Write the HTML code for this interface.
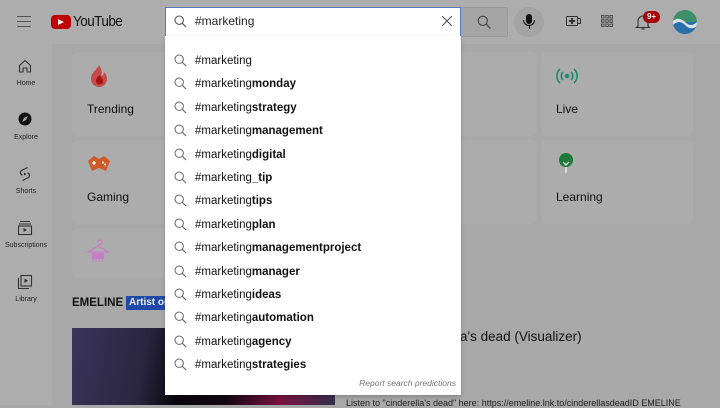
<!DOCTYPE html>
<html><head><meta charset="utf-8"><style>
*{margin:0;padding:0;box-sizing:border-box}
body{width:720px;height:405px;overflow:hidden;background:#a8a8a8;font-family:"Liberation Sans",Arial,sans-serif;position:relative;color:#0f0f0f}
.hdr{position:absolute;left:0;top:0;width:720px;height:44px;background:#adadad}
.side{position:absolute;left:0;top:44px;width:52px;height:361px;background:#adadad}
.si{position:absolute;left:0;width:52px;text-align:center;font-size:7px;color:#222}
.card{position:absolute;width:152px;height:84px;background:#acacac;border-radius:6px}
.card span{position:absolute;left:15px;top:50px;font-size:12px}
.dd{position:absolute;left:165px;top:36px;width:296px;height:359px;background:#fff;box-shadow:0 2px 4px rgba(0,0,0,.2)}
.row{position:absolute;left:0;height:23px;width:296px;font-size:11.5px;color:#111}
.row svg{position:absolute;left:9px;top:2px}
.row b{font-weight:bold}
.row .t{position:absolute;left:30px;top:3px}
</style></head><body>
<div class="hdr"></div>
<div class="side"></div>
<div style="position:absolute;left:17px;top:16px;width:14px;height:1.3px;background:#555;box-shadow:0 5px 0 #555,0 10px 0 #555"></div>
<div style="position:absolute;left:51px;top:15px;width:20px;height:14px;background:#c00000;border-radius:4px"></div>
<div style="position:absolute;left:58px;top:18.5px;width:0;height:0;border-left:6px solid #eee;border-top:3.5px solid transparent;border-bottom:3.5px solid transparent"></div>
<div style="position:absolute;left:73px;top:13px;font-size:15px;letter-spacing:-0.6px;color:#111;transform:scaleX(.9);transform-origin:left">YouTube</div>
<div style="position:absolute;left:165px;top:7px;width:296px;height:30px;background:#fff;border:1px solid #5c7bbf;border-bottom-color:#b8c4e0"></div>
<svg style="position:absolute;left:174px;top:15px" width="13" height="13" viewBox="0 0 13 13"><circle cx="5.2" cy="5.2" r="4.2" fill="none" stroke="#555" stroke-width="1.1"/><path d="M8.3 8.3L12 12" stroke="#555" stroke-width="1.2"/></svg>
<div style="position:absolute;left:195px;top:14px;font-size:12px;color:#222">#marketing</div>
<svg style="position:absolute;left:442px;top:16px" width="10" height="10"><path d="M0 0L10 10M10 0L0 10" stroke="#555" stroke-width="1.1"/></svg>
<div style="position:absolute;left:461px;top:7px;width:47px;height:30px;background:#a5a5a5;border:1px solid #999;border-left:none;border-radius:0 2px 2px 0"></div>
<svg style="position:absolute;left:477px;top:15px" width="14" height="14"><circle cx="5.8" cy="5.8" r="4.6" fill="none" stroke="#444" stroke-width="1.1"/><path d="M9.2 9.2L13.5 13.5" stroke="#444" stroke-width="1.2"/></svg>
<div style="position:absolute;left:514px;top:7px;width:30px;height:30px;border-radius:50%;background:#a3a3a3"></div>
<div style="position:absolute;left:526px;top:14px;width:6px;height:10px;border-radius:3px;background:#111"></div>
<div style="position:absolute;left:523px;top:20px;width:12px;height:6px;border:1.2px solid #111;border-top:none;border-radius:0 0 6px 6px"></div>
<div style="position:absolute;left:528.5px;top:26px;width:1.2px;height:3px;background:#111"></div>
<div style="position:absolute;left:566px;top:16px;width:12px;height:10px;border:1.2px solid #333;border-radius:1px"></div>
<div style="position:absolute;left:569px;top:20.4px;width:6px;height:1.2px;background:#333"></div><div style="position:absolute;left:571.4px;top:18px;width:1.2px;height:6px;background:#333"></div>
<div style="position:absolute;left:578px;top:18px;width:3px;height:6px;border:1.2px solid #333;border-left:none"></div>
<svg style="position:absolute;left:601px;top:15px" width="12" height="12"><g fill="none" stroke="#444" stroke-width=".9"><rect x=".5" y=".5" width="2.5" height="2.5"/><rect x="4.8" y=".5" width="2.5" height="2.5"/><rect x="9" y=".5" width="2.5" height="2.5"/><rect x=".5" y="4.8" width="2.5" height="2.5"/><rect x="4.8" y="4.8" width="2.5" height="2.5"/><rect x="9" y="4.8" width="2.5" height="2.5"/><rect x=".5" y="9" width="2.5" height="2.5"/><rect x="4.8" y="9" width="2.5" height="2.5"/><rect x="9" y="9" width="2.5" height="2.5"/></g></svg>
<svg style="position:absolute;left:635px;top:13px" width="16" height="18"><path d="M3 13V8a5 5 0 0 1 10 0v5l1.5 1.5h-13z" fill="none" stroke="#333" stroke-width="1.1"/><path d="M6.5 16h3" stroke="#333" stroke-width="1.2"/></svg>
<div style="position:absolute;left:643px;top:11px;width:17px;height:12px;border-radius:6px;background:#a80000;color:#fff;font-size:8px;font-weight:bold;text-align:center;line-height:12px">9+</div>
<svg style="position:absolute;left:673px;top:10px" width="24" height="24"><defs><clipPath id="c"><circle cx="12" cy="12" r="12"/></clipPath></defs><g clip-path="url(#c)"><rect width="24" height="24" fill="#3d8f6a"/><rect y="12" width="24" height="12" fill="#2a6fa8"/><path d="M0 11q6-5 12 1t12 0v4q-6 5-12-1t-12 0z" fill="#d8e4ea"/></g></svg>
<svg style="position:absolute;left:18px;top:59px" width="14" height="14"><path d="M1.5 6.5L7 1.5l5.5 5V13h-3.5V9h-4v4H1.5z" fill="none" stroke="#333" stroke-width="1.1"/></svg>
<div class="si" style="top:80px">Home</div>
<svg style="position:absolute;left:18px;top:112px" width="14" height="14"><circle cx="7" cy="7" r="6.5" fill="#111"/><path d="M4 10l2-4 4-2-2 4z" fill="#aaa"/></svg>
<div class="si" style="top:134px">Explore</div>
<svg style="position:absolute;left:18px;top:166px" width="14" height="16"><path d="M9.5 1.5L3.5 4.5a2.5 2.5 0 0 0 1 4.5M4.5 14.5l6-3a2.5 2.5 0 0 0-1-4.5" fill="none" stroke="#333" stroke-width="1.2"/><path d="M6 6.5v3l2.5-1.5z" fill="#333"/></svg>
<div class="si" style="top:188px">Shorts</div>
<svg style="position:absolute;left:17px;top:220px" width="16" height="16"><path d="M3 1.5h10M2 4h12" stroke="#333" stroke-width="1"/><rect x="1.5" y="6" width="13" height="8.5" fill="none" stroke="#333" stroke-width="1.1"/><path d="M6.5 8v4l3.5-2z" fill="#333"/></svg>
<div class="si" style="top:242px">Subscriptions</div>
<svg style="position:absolute;left:17px;top:274px" width="16" height="16"><path d="M1.5 4v10.5H12" fill="none" stroke="#333" stroke-width="1.1"/><rect x="4" y="1.5" width="10.5" height="10.5" fill="none" stroke="#333" stroke-width="1.1"/><path d="M7.5 4.5v4.5l3.5-2.2z" fill="#333"/></svg>
<div class="si" style="top:296px">Library</div>
<div class="card" style="left:72px;top:52px"><span>Trending</span></div>
<svg style="position:absolute;left:89px;top:64px" width="20" height="24"><path d="M10 1c-1 4-8 7-8 14a8 8 0 0 0 16 0c0-4-2-6-3-7 0 3-2 4-3 4 2-3 0-8-2-11z" fill="#c24b4b"/><path d="M7 17a3.5 3.5 0 0 0 7 0c0-3-3-4-3-6-2 1-4 3-4 6z" fill="#aa1111"/></svg>
<div class="card" style="left:72px;top:140px"><span>Gaming</span></div>
<svg style="position:absolute;left:86px;top:155px" width="26" height="18"><path d="M2 6l6-5 5 3 5-3 6 5-4 10-7-3-7 3z" fill="#cf5a2a"/><path d="M6 8h4M8 6v4" stroke="#fff" stroke-width="1.3"/><circle cx="17" cy="7.5" r="1" fill="#fff"/><circle cx="19" cy="9.5" r="1" fill="#fff"/></svg>
<div class="card" style="left:72px;top:228px;height:50px"></div>
<svg style="position:absolute;left:86px;top:238px" width="24" height="26"><path d="M12 4a2 2 0 1 1 2 2l-2 2L2 14h20L12 8" fill="none" stroke="#c97cc6" stroke-width="1.3"/><rect x="6" y="15" width="12" height="6" fill="#c97cc6"/><path d="M7 21v3M10 21v3M13 21v3M16 21v3" stroke="#c97cc6"/></svg>
<div class="card" style="left:385px;top:52px"><span style="left:0">hows</span></div>
<div class="card" style="left:385px;top:140px"></div>
<div class="card" style="left:541px;top:52px"><span>Live</span></div>
<svg style="position:absolute;left:555px;top:66px" width="24" height="20"><circle cx="12" cy="10" r="2.3" fill="#1f8a6e"/><path d="M8 6a5.5 5.5 0 0 0 0 8M16 6a5.5 5.5 0 0 1 0 8M5 3a9.5 9.5 0 0 0 0 14M19 3a9.5 9.5 0 0 1 0 14" fill="none" stroke="#1f8a6e" stroke-width="1.6"/></svg>
<div class="card" style="left:541px;top:140px"><span>Learning</span></div>
<svg style="position:absolute;left:557px;top:152px" width="18" height="22"><circle cx="9" cy="8" r="7" fill="#1d7a3a"/><path d="M9 15v6M6 10l3 3 3-3" stroke="#eee" stroke-width="1.3" fill="none"/></svg>
<div style="position:absolute;left:72px;top:297px;font-size:11.5px;font-weight:bold;color:#111">EMELINE</div>
<div style="position:absolute;left:126px;top:296px;width:40px;height:14px;background:#1f49a6;color:#eee;font-size:10px;font-weight:bold;padding-left:3px;line-height:14px;white-space:nowrap;overflow:hidden">Artist on</div>
<div style="position:absolute;left:72px;top:328px;width:263px;height:77px;background:linear-gradient(100deg,#3a3558 0%,#2a2540 28%,#08070c 42%,#140810 60%,#7a1240 80%,#34304e 100%)"></div>
<div style="position:absolute;left:460px;top:329px;font-size:13.5px;color:#111">a's dead (Visualizer)</div>
<div style="position:absolute;left:346px;top:398px;font-size:9px;color:#222;white-space:nowrap">Listen to "cinderella's dead" here: https://emeline.lnk.to/cinderellasdeadID EMELINE</div>
<div class="dd">
<div class="row" style="top:16px"><svg width="13" height="13"><circle cx="5.2" cy="5.2" r="4.2" fill="none" stroke="#666" stroke-width="1"/><path d="M8.3 8.3L12 12" stroke="#666" stroke-width="1.1"/></svg><span class="t">#marketing</span></div>
<div class="row" style="top:39.4px"><svg width="13" height="13"><circle cx="5.2" cy="5.2" r="4.2" fill="none" stroke="#666" stroke-width="1"/><path d="M8.3 8.3L12 12" stroke="#666" stroke-width="1.1"/></svg><span class="t">#marketing<b>monday</b></span></div>
<div class="row" style="top:62.8px"><svg width="13" height="13"><circle cx="5.2" cy="5.2" r="4.2" fill="none" stroke="#666" stroke-width="1"/><path d="M8.3 8.3L12 12" stroke="#666" stroke-width="1.1"/></svg><span class="t">#marketing<b>strategy</b></span></div>
<div class="row" style="top:86.2px"><svg width="13" height="13"><circle cx="5.2" cy="5.2" r="4.2" fill="none" stroke="#666" stroke-width="1"/><path d="M8.3 8.3L12 12" stroke="#666" stroke-width="1.1"/></svg><span class="t">#marketing<b>management</b></span></div>
<div class="row" style="top:109.6px"><svg width="13" height="13"><circle cx="5.2" cy="5.2" r="4.2" fill="none" stroke="#666" stroke-width="1"/><path d="M8.3 8.3L12 12" stroke="#666" stroke-width="1.1"/></svg><span class="t">#marketing<b>digital</b></span></div>
<div class="row" style="top:133px"><svg width="13" height="13"><circle cx="5.2" cy="5.2" r="4.2" fill="none" stroke="#666" stroke-width="1"/><path d="M8.3 8.3L12 12" stroke="#666" stroke-width="1.1"/></svg><span class="t">#marketing<b>_tip</b></span></div>
<div class="row" style="top:156.4px"><svg width="13" height="13"><circle cx="5.2" cy="5.2" r="4.2" fill="none" stroke="#666" stroke-width="1"/><path d="M8.3 8.3L12 12" stroke="#666" stroke-width="1.1"/></svg><span class="t">#marketing<b>tips</b></span></div>
<div class="row" style="top:179.8px"><svg width="13" height="13"><circle cx="5.2" cy="5.2" r="4.2" fill="none" stroke="#666" stroke-width="1"/><path d="M8.3 8.3L12 12" stroke="#666" stroke-width="1.1"/></svg><span class="t">#marketing<b>plan</b></span></div>
<div class="row" style="top:203.2px"><svg width="13" height="13"><circle cx="5.2" cy="5.2" r="4.2" fill="none" stroke="#666" stroke-width="1"/><path d="M8.3 8.3L12 12" stroke="#666" stroke-width="1.1"/></svg><span class="t">#marketing<b>managementproject</b></span></div>
<div class="row" style="top:226.6px"><svg width="13" height="13"><circle cx="5.2" cy="5.2" r="4.2" fill="none" stroke="#666" stroke-width="1"/><path d="M8.3 8.3L12 12" stroke="#666" stroke-width="1.1"/></svg><span class="t">#marketing<b>manager</b></span></div>
<div class="row" style="top:250px"><svg width="13" height="13"><circle cx="5.2" cy="5.2" r="4.2" fill="none" stroke="#666" stroke-width="1"/><path d="M8.3 8.3L12 12" stroke="#666" stroke-width="1.1"/></svg><span class="t">#marketing<b>ideas</b></span></div>
<div class="row" style="top:273.4px"><svg width="13" height="13"><circle cx="5.2" cy="5.2" r="4.2" fill="none" stroke="#666" stroke-width="1"/><path d="M8.3 8.3L12 12" stroke="#666" stroke-width="1.1"/></svg><span class="t">#marketing<b>automation</b></span></div>
<div class="row" style="top:296.8px"><svg width="13" height="13"><circle cx="5.2" cy="5.2" r="4.2" fill="none" stroke="#666" stroke-width="1"/><path d="M8.3 8.3L12 12" stroke="#666" stroke-width="1.1"/></svg><span class="t">#marketing<b>agency</b></span></div>
<div class="row" style="top:320.2px"><svg width="13" height="13"><circle cx="5.2" cy="5.2" r="4.2" fill="none" stroke="#666" stroke-width="1"/><path d="M8.3 8.3L12 12" stroke="#666" stroke-width="1.1"/></svg><span class="t">#marketing<b>strategies</b></span></div>
<div style="position:absolute;right:5px;top:342px;font-size:8.5px;font-style:italic;color:#777">Report search predictions</div>
</div>
</body></html>
